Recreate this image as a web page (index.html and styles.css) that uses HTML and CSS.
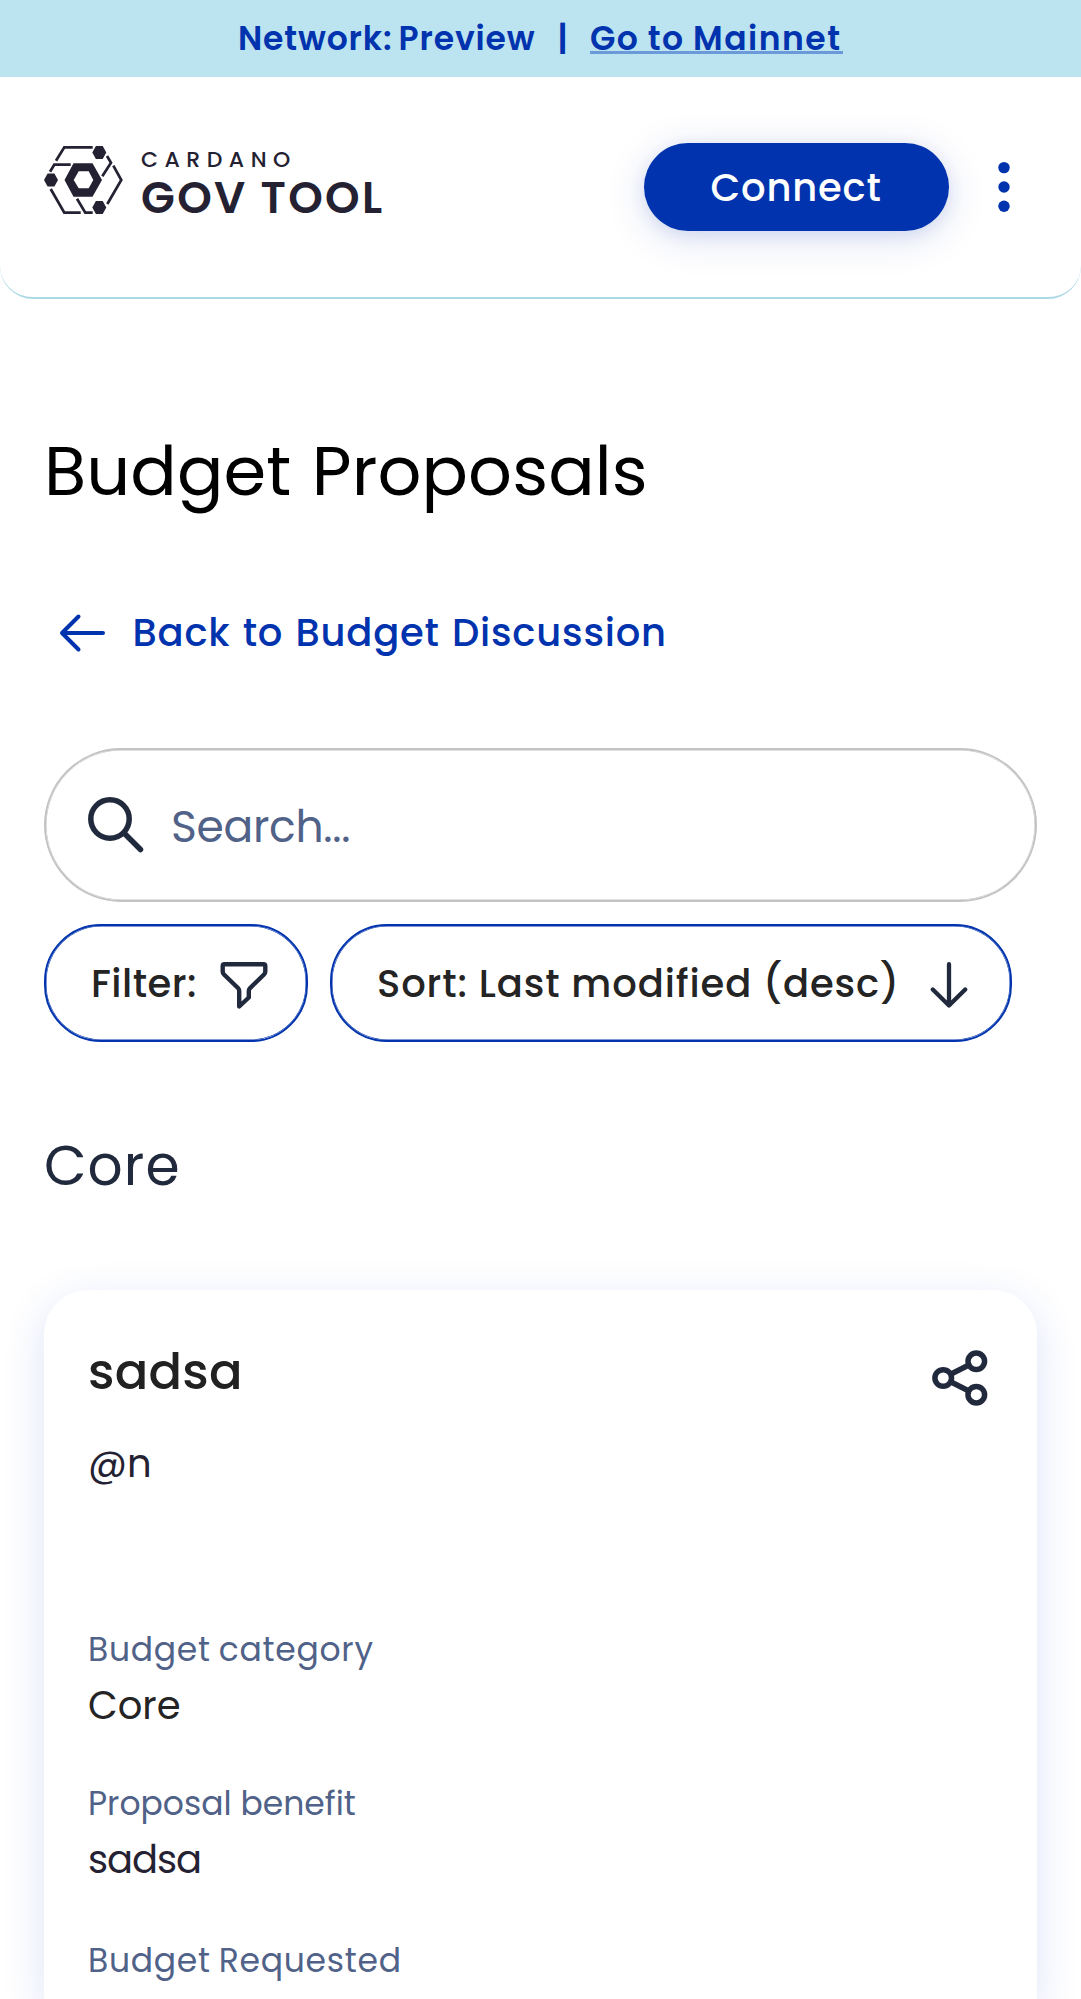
FILE: index.html
```html
<!DOCTYPE html>
<html lang="en">
<head>
<meta charset="utf-8">
<title>Budget Proposals</title>
<link rel="stylesheet" href="styles.css">
</head>
<body>
<div class="banner">
  <span class="banner-network">Network: Preview</span>
  <span class="banner-divider">|</span>
  <a class="banner-link">Go to Mainnet</a>
</div>

<header class="header">
  <div class="logo">
    <svg class="logo-mark" width="79" height="68" viewBox="0 0 79 68" fill="none" stroke="#242232" stroke-width="2.7">
      <path d="M12 14.7 20.3 1.3H48.7M6 25.7 10.3 18.7H26.7M63 10 67 16.7 58.3 30.3M69.3 19.7 77.3 34 63.3 58M6.7 43 20.3 66.7H36.7M33 52.7 41.3 66.7H48.7"/>
      <g fill="#242232" stroke="none">
        <path fill-rule="evenodd" d="M20.5 34 29.5 17.3H48.5L58 34 48.5 50.7H29.5ZM29.7 34 34.7 42.3H44.7L49.3 34 44.7 25.3H34.7Z"/>
        <path d="M48.3 6.4 51.9 0H58.7L62.3 6.4 58.7 12.9H51.9ZM0 34 3.6 27.6H10.4L14 34 10.4 40.4H3.6ZM48.3 61.6 51.9 55.1H58.7L62.3 61.6 58.7 68H51.9Z"/>
      </g>
    </svg>
    <div class="logo-text">
      <span class="logo-small">CARDANO</span>
      <span class="logo-large">GOV TOOL</span>
    </div>
  </div>
  <div class="header-actions">
    <button class="connect">Connect</button>
    <svg class="dots" width="12" height="52" viewBox="0 0 12 52" fill="#0033ad">
      <circle cx="6" cy="6.6" r="5.7"/><circle cx="6" cy="26" r="5.7"/><circle cx="6" cy="45.3" r="5.7"/>
    </svg>
  </div>
</header>

<main class="main">
  <h1 class="page-title">Budget Proposals</h1>
  <a class="back">
    <svg width="46" height="40" viewBox="0 0 46 40" fill="none" stroke="#0033ad" stroke-width="4" stroke-linecap="round" stroke-linejoin="round"><path d="M44 20H3M19.5 3.5 3 20 19.5 36.5"/></svg>
    <span>Back to Budget Discussion</span>
  </a>

  <div class="search">
    <svg width="56" height="56" viewBox="0 0 56 56" fill="none" stroke="#212a3d" stroke-width="5.5" stroke-linecap="round"><circle cx="22" cy="22" r="19.2"/><path d="M36 36 52.5 52.5"/></svg>
    <span class="search-text">Search...</span>
  </div>

  <div class="chips">
    <button class="chip chip-filter">
      <span>Filter:</span>
      <svg width="48" height="48" viewBox="0 0 48 48" fill="none" stroke="#212a3d" stroke-width="4.4" stroke-linejoin="round"><path d="M4.5 3.2H43.5Q45.3 3.2 45.3 5V10.5Q45.3 12.2 44 13.5L29.8 27.3Q28.8 28.3 28.8 30V36.5L19.2 45.5V30Q19.2 28.3 18.2 27.3L4 13.5Q2.7 12.2 2.7 10.5V5Q2.7 3.2 4.5 3.2Z"/></svg>
    </button>
    <button class="chip chip-sort">
      <span>Sort: Last modified (desc)</span>
      <svg width="38" height="48" viewBox="0 0 38 48" fill="none" stroke="#212a3d" stroke-width="4.3" stroke-linecap="round" stroke-linejoin="round"><path d="M19 3.2V44.5M2.8 28.5 19 44.5 35.2 28.5"/></svg>
    </button>
  </div>

  <h2 class="section-title">Core</h2>

  <article class="card">
    <div class="card-head">
      <h3 class="card-title">sadsa</h3>
      <svg class="share" width="56" height="56" viewBox="0 0 56 56" fill="none" stroke="#212a3d" stroke-width="5.5"><circle cx="11.2" cy="28" r="8.3"/><circle cx="44.3" cy="11.3" r="8.3"/><circle cx="44.3" cy="44.7" r="8.3"/><path d="M18.6 24.3 36.9 15M18.6 31.7 36.9 41"/></svg>
    </div>
    <p class="author">@n</p>
    <dl class="facts">
      <div class="fact"><dt class="label label-category">Budget category</dt><dd class="value">Core</dd></div>
      <div class="fact"><dt class="label">Proposal benefit</dt><dd class="value value-benefit">sadsa</dd></div>
      <div class="fact"><dt class="label label-requested">Budget Requested</dt></div>
    </dl>
  </article>
</main>
</body>
</html>
```
FILE: styles.css
```css
* { box-sizing: border-box; margin: 0; padding: 0; }

body {
  display: flex;
  flex-direction: column;
  height: 1999px;
  overflow: hidden;
  background: #fff;
  color: #242424;
  font-family: Poppins, Inter, "Open Sans", sans-serif;
}

svg { display: block; flex: none; }
button { border: 0; background: none; font: inherit; color: inherit; }
span, a, h1, h2, h3, dt, dd { white-space: nowrap; }

.banner {
  display: flex;
  align-items: center;
  flex: none;
  height: 77px;
  padding-left: 238px;
  background: #bbe3f0;
  color: #0033ad;
  font-size: 33px;
  font-weight: 600;
  line-height: 77px;
}
.banner-network { width: 319.5px; letter-spacing: .85px; word-spacing: -2.5px; }
.banner-divider { width: 32.5px; }
.banner-link {
  width: 253px;
  height: 31px;
  border-bottom: 3px solid #6c99d8;
  line-height: 32px;
  letter-spacing: 1.5px;
  word-spacing: -1px;
}

.header {
  display: flex;
  flex: none;
  justify-content: space-between;
  align-items: flex-start;
  height: 222px;
  padding: 66px 71.5px 0 44px;
  border-bottom: 2px solid #add8e6;
  border-radius: 0 0 33px 33px;
}
.logo { display: flex; gap: 18px; padding-top: 3px; }
.logo-text { display: flex; flex-direction: column; padding-top: 1px; color: #242232; }
.logo-small { font-size: 22px; font-weight: 500; line-height: 26px; letter-spacing: 6.5px; }
.logo-large { margin-top: 1px; font-size: 44px; font-weight: 600; line-height: 48px; letter-spacing: 2.35px; }
.header-actions { display: flex; align-items: center; gap: 48.5px; }
.connect {
  width: 305px;
  height: 88px;
  padding: 1px 1px 0 0;
  border-radius: 44px;
  background: #0033ad;
  box-shadow: 0 7px 41px rgba(0, 51, 173, .14), 0 4px 16px rgba(0, 51, 173, .1);
  color: #fff;
  font-size: 38.5px;
  font-weight: 500;
  line-height: 88px;
  letter-spacing: .8px;
}

.main {
  display: flex;
  flex: 1;
  flex-direction: column;
  min-height: 0;
  padding: 132px 44.5px 0 44px;
}
.page-title {
  color: #000;
  font-size: 68.75px;
  font-weight: 400;
  line-height: 80px;
  letter-spacing: .1px;
  word-spacing: 2px;
}
.back {
  display: flex;
  align-items: center;
  gap: 27.5px;
  height: 60px;
  margin-top: 92px;
  padding-left: 15px;
  color: #0033ad;
  font-size: 38.5px;
  font-weight: 500;
  line-height: 60px;
  letter-spacing: .8px;
  word-spacing: 1.4px;
}

.search {
  display: flex;
  flex: none;
  align-items: center;
  gap: 27px;
  height: 154px;
  margin-top: 85px;
  padding-left: 42px;
  border: 2px solid #c3c3c3;
  border-radius: 77px;
  box-shadow: inset 0 0 0 .5px #c3c3c3;
  color: #506288;
  font-size: 44px;
}
.search-text { padding-top: 3px; letter-spacing: -.3px; }

.chips { display: flex; flex: none; gap: 22px; margin-top: 22px; }
.chip {
  display: flex;
  align-items: center;
  height: 118px;
  border: 2px solid #0033ad;
  border-radius: 57px;
  box-shadow: inset 0 0 0 .5px #0033ad;
  font-size: 38.5px;
  font-weight: 500;
}
.chip svg { margin-top: 3px; }
.chip-filter { width: 264px; justify-content: space-between; padding: 0 38px 0 45px; letter-spacing: .5px; }
.chip-sort { width: 682px; justify-content: space-between; padding: 0 42px 0 45px; letter-spacing: .9px; }

.section-title {
  margin-top: 89px;
  color: #212a3d;
  font-size: 55px;
  font-weight: 400;
  line-height: 70px;
  letter-spacing: 1.1px;
}

.card {
  flex: 1;
  min-height: 0;
  margin-top: 89px;
  padding: 52px 49px 0 44px;
  border-radius: 44px 44px 0 0;
  background: #fff;
  box-shadow: 0 11px 41px rgba(47, 80, 220, .16);
}
.card-head { display: flex; justify-content: space-between; height: 60px; }
.card-title {
  color: #212121;
  font-size: 49.5px;
  font-weight: 500;
  line-height: 60px;
  letter-spacing: .25px;
}
.share { margin-top: 8px; }
.author { margin-top: 37px; color: #242232; font-size: 38.5px; line-height: 50px; }
.facts { margin-top: 139px; }
.fact { height: 154px; }
.fact:last-child { height: 44px; margin-top: 3px; }
.label { color: #506288; font-size: 33px; line-height: 44px; }
.label-category, .label-requested { letter-spacing: .72px; word-spacing: -1.5px; }
.value { margin-top: 9px; font-size: 38.5px; line-height: 50px; }
.value-benefit { color: #242232; letter-spacing: -1.06px; }
```
